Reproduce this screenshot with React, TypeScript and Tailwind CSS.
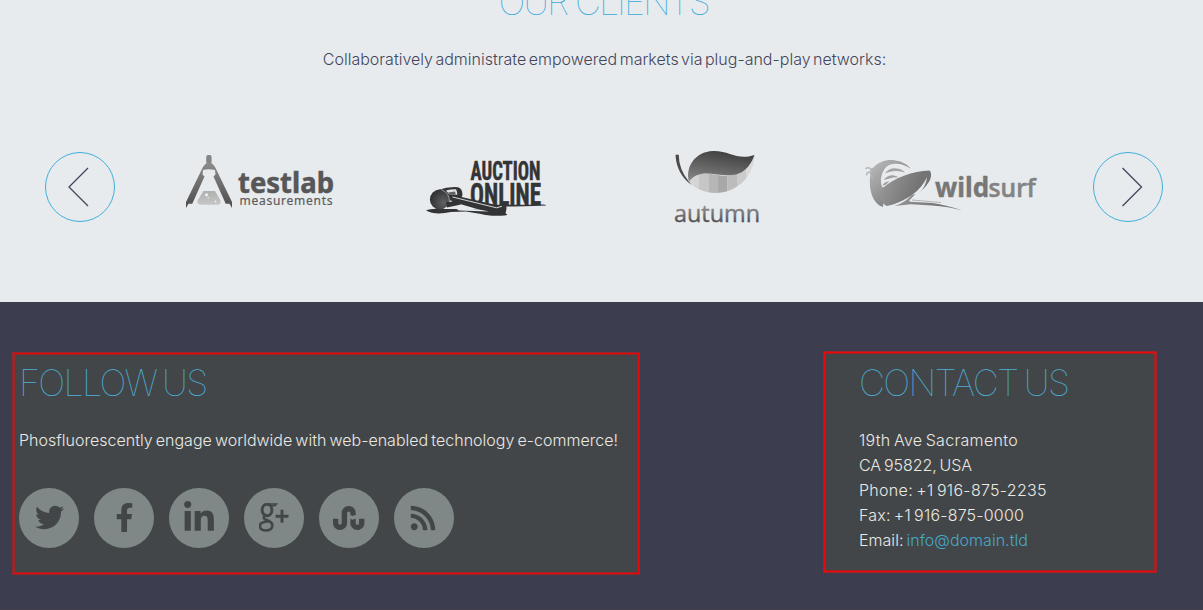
import { FaFacebookF, FaLinkedinIn, FaRss, FaStumbleupon, FaTwitter } from "react-icons/fa";
import type { ReactNode } from "react";

function Arrow({ flip }: { flip?: boolean }) {
  return (
    <button className="flex size-[70px] items-center justify-center rounded-full border border-[#41afdc]">
      <svg className={flip ? "ml-[7px]" : "mr-[3px]"} width="22" height="40" viewBox="0 0 22 40" fill="none" stroke="#44445c" strokeWidth="1.3">
        <path d={flip ? "M1.500 1 20.500 20 1.500 39" : "M20 1 1 20 20 39"} />
      </svg>
    </button>
  );
}

function TestLab() {
  return (
    <svg width="152" height="56" viewBox="184 153 152 56" fontWeight="400">
      <defs>
        <linearGradient id="leg" x1="0" y1="0" x2="0" y2="1">
          <stop offset="0" stopColor="#8b8b8b" />
          <stop offset="1" stopColor="#4d4d4d" />
        </linearGradient>
        <linearGradient id="fluid" x1="0" y1="0" x2="0" y2="1">
          <stop offset="0" stopColor="#b0b0b0" />
          <stop offset="1" stopColor="#c6c6c6" />
        </linearGradient>
      </defs>
      <rect x="206.200" y="155" width="5.400" height="9" rx="2" fill="#868686" />
      <path
        d="M207 163h4c1.500.8 4 3 5 6l16 33v6l-2.500-4.200h-3.800L213.500 176.500l2-2-.5-4.500q-6-1.500-12 0l-.5 4.500 2 2L192.300 203.800h-3.800L186 208v-6l16-33c1-3 3.500-5.200 5-6Z"
        fill="url(#leg)"
      />
      <path d="M203.500 191h11.500l5.500 9.500q.8 4.200-3 4.200H200.500q-3.800-.3-3-4.200Z" fill="url(#fluid)" />
      <circle cx="206.500" cy="194.800" r="1.500" fill="#eef0f1" />
      <circle cx="208.200" cy="197.800" r=".8" fill="#eef0f1" />
      <circle cx="215.500" cy="201.500" r=".9" fill="#eef0f1" />
      <text x="238" y="192.500" textLength="96" lengthAdjust="spacingAndGlyphs" fontSize="28" fontWeight="700" fill="#575757" stroke="#575757" strokeWidth=".5" fontFamily="Noto Sans, sans-serif">testlab</text>
      <text x="239.500" y="204.500" textLength="93" fontSize="12" fill="#5c5c5c" stroke="#5c5c5c" strokeWidth=".2" fontFamily="Noto Sans, sans-serif">measurements</text>
    </svg>
  );
}

function Auction() {
  return (
    <svg width="124" height="60" viewBox="424 158 124 60" fill="#333436">
      <defs>
        <radialGradient id="gavel" cx=".7" cy=".65" r=".7">
          <stop offset="0" stopColor="#606163" />
          <stop offset="1" stopColor="#303133" />
        </radialGradient>
      </defs>
      <g fontWeight="700" stroke="#333436" strokeWidth=".5" fontFamily="Roboto Condensed, Liberation Sans Narrow, Roboto, sans-serif">
        <text x="470.500" y="180" textLength="70" lengthAdjust="spacingAndGlyphs" fontSize="25">AUCTION</text>
        <text x="470" y="205" textLength="71" lengthAdjust="spacingAndGlyphs" fontSize="31">ONLINE</text>
      </g>
      <path d="M480 204.800h58q9-.6 8 .7-10 .8-32 .9l-34 .3Z" />
      <path d="M426 210.500q5-2.500 16-1.500h22l21 1 19 3q6 1.500 1 2.500-16 1-24-1.500l-15-2.500-15 .5q-16 3.500-25-1.500Z" />
      <path d="M438 190q10-3.500 20-2.800 4.500 1.300 4.500 7.800l-1.500 4-20 3Z" />
      <path d="M446 190.500q5-1.500 10-1.300 1.200 2 1.300 5.500l-8.300-.5Z" fill="#dfe1e3" />
      <path d="m448 192.500 7-1 .8 3-6.300.2Z" fill="#606163" />
      <path d="m452 196.500 3-.9 43.500 10 4-1.300q4.500.2 4 4.200l-1 5.500q-6 1.500-13-.5l-41-12Z" />
      <path d="m452.500 197 44 10.800 5.500-1.500" stroke="#d2d4d6" fill="none" strokeWidth="1" />
      <ellipse cx="439.800" cy="199.500" rx="9.900" ry="10" fill="url(#gavel)" />
      <path d="M441 189.500q9 3 8.500 14" fill="none" stroke="#b9bbbd" strokeWidth=".7" />
      <path d="m446 202 10-.5 5 3-14 3Z" />
      <path d="m454 207.500 28 2.500 7 1.500-30-1Z" fill="#e8ebee" />
    </svg>
  );
}

function Autumn() {
  return (
    <svg width="86" height="74" viewBox="674 150 86 74" fontWeight="400">
      <defs>
        <linearGradient id="leaf" x1=".2" y1="1" x2=".55" y2="0">
          <stop offset="0" stopColor="#858585" />
          <stop offset="1" stopColor="#3f3f3f" />
        </linearGradient>
        <linearGradient id="word" x1="0" y1="0" x2="0" y2="1">
          <stop offset=".25" stopColor="#999" />
          <stop offset=".8" stopColor="#505050" />
        </linearGradient>
        <clipPath id="belly">
          <path d="M689 181.500C697 171 708 173 717 175c14 2.500 28-1 37.500-20C754 178 735 193 716 193c-11 0-21-4-27-11.500Z" />
        </clipPath>
      </defs>
      <g clipPath="url(#belly)">
        <path fill="#d5d5d5" d="M687 150h12v44h-12Z" />
        <path fill="#c6c6c6" d="M699 150h9.500v44H699Z" />
        <path fill="#b6b6b6" d="M708.500 150h9.500v44h-9.500Z" />
        <path fill="#a8a8a8" d="M718 150h9.500v44H718Z" />
        <path fill="#bcbcbc" d="M727.500 150h9.500v44h-9.500Z" />
        <path fill="#cbcbcb" d="M737 150h9v44h-9Z" />
        <path fill="#d9dadc" d="M746 150h10v44h-10Z" />
      </g>
      <path d="M675.500 155q1.500-.8 3.300 0 0 14 9.700 26l3 4q-15-11-16-30Z" fill="#4b4b4b" />
      <path d="M689 181.500c-4-14 6-30 24-30.500 17-.5 24 10 41.500 4C747 175 735 177 717 174.500c-12-2-21-2-28 7Z" fill="url(#leaf)" />
      <text x="674" y="221.500" textLength="86" lengthAdjust="spacingAndGlyphs" fontSize="23.500" fill="url(#word)" stroke="url(#word)" strokeWidth=".4" fontFamily="Open Sans, Noto Sans, sans-serif">autumn</text>
    </svg>
  );
}

function WildSurf() {
  return (
    <svg width="174" height="56" viewBox="864 158 174 56">
      <defs>
        <linearGradient id="wave" x1="0" y1="0" x2=".8" y2="1">
          <stop offset="0" stopColor="#bcbcbc" />
          <stop offset="1" stopColor="#747474" />
        </linearGradient>
        <linearGradient id="board" x1="0" y1="0" x2="1" y2=".3">
          <stop offset="0" stopColor="#9c9c9c" />
          <stop offset=".8" stopColor="#747474" />
        </linearGradient>
      </defs>
      <path
        d="M870.500 174c-1-4 0-6 3-6.500 5-6 14-8.500 22-7 7 1 12 4 15 8-6-4-12-5.500-18-4.500-5 1-8 4-9 7-2 3-3 8-2.500 12l1 4 3 1-2 19c-10-3-15-17-12.500-33Z"
        fill="url(#wave)"
      />
      <path d="M885 173.500q4-6 12-5 5 .5 8 4-5-1.800-10-1.500-5 .3-10 2.500Z" fill="#a5a5a5" />
      <path d="M883.500 180q4-5.300 10.500-4.600 3 .3 4.500 2-5-.2-9 1-3 .8-6 1.600Z" fill="#a0a0a0" />
      <path d="M882.500 185.500q2-3.800 7-4.200l-4 3.500Z" fill="#999" />
      <path d="M865.500 168.800q3-2.300 5.500.5l1 3.500M866.500 175.500q0-3.500 4-3.500M870 173l3 6" stroke="#b4b4b4" fill="none" strokeWidth="1.300" />
      <path d="M881 189.500c13-12 32-18.500 48.500-19 2.500 2 2 8-1 12-7 11-20 17-35 22l-7 1.500c-6-4-7-10-5.500-16.500Z" fill="url(#board)" />
      <path d="M886.500 207q32-10 40.500-30-2 19-27.500 26.800l-5.500 2.200Z" fill="#e8ebee" />
      <path d="M894.500 206q12-4 17-11l4-1-6 6.200q-1 1.300 1 1.500l22 1.300q14 2 30 7.500-14-4-30.500-5l-21-1.300-16.500 1.800Z" fill="url(#board)" />
      <path d="m912 200 29 2.500" stroke="#b4b5b6" strokeWidth="1" fill="none" />
      <text x="935" y="196.500" textLength="54" lengthAdjust="spacingAndGlyphs" fontSize="26" fontWeight="700" fill="#777" stroke="#777" strokeWidth=".4" fontFamily="Noto Sans, sans-serif">wild</text>
      <text x="988.500" y="196.500" textLength="47" lengthAdjust="spacingAndGlyphs" fontSize="26" fontWeight="500" fill="#838383" stroke="#838383" strokeWidth=".6" fontFamily="Noto Sans, sans-serif">surf</text>
    </svg>
  );
}

function GooglePlus() {
  return (
    <svg width="30" height="30" viewBox="0 0 30 30" fill="none" stroke="#434648">
      <ellipse cx="8" cy="7" rx="4.900" ry="5.700" strokeWidth="3" />
      <path d="M9 1h8.500l-1.500 1.800h-4" strokeWidth="1.500" />
      <path d="M6 12.800c-3.500 3.200 1 3.700 4.500 5.500 5 3 3 9.200-3.500 9.200-7.500 0-8-7-2-8.500l5-.7" strokeWidth="2.600" />
      <path d="M16.500 13.200h13M23 6.700v13" strokeWidth="2.900" />
    </svg>
  );
}

function Social({ children }: { children: ReactNode }) {
  return <a className="flex size-[60px] items-center justify-center rounded-full bg-[#7f8886] text-[#434648]">{children}</a>;
}

export default function App() {
  return (
    <div className="flex h-[610px] w-[1203px] flex-col overflow-hidden border-b border-[#463e49] bg-[#3c3e50] font-['Inter',sans-serif] text-base leading-[25px] font-light">
      <section className="flex h-[302px] shrink-0 flex-col items-center bg-[#e8ebee] text-[#44465b]">
        <h2 className="-mt-[22px] h-12 pl-1 text-[36px] leading-[48px] font-thin tracking-[-2.1px] whitespace-nowrap text-[#38aadb]">OUR CLIENTS</h2>
        <p className="mt-[21px] pl-[6px] tracking-[0.01px] whitespace-nowrap [word-spacing:-2.1px]">Collaboratively administrate empowered markets via plug-and-play networks:</p>
        <div className="mt-[76px] flex h-[78px] w-full items-start pl-[45px]">
          <div className="pt-1"><Arrow /></div>
          <div className="ml-[69px] pt-[5px]"><TestLab /></div>
          <div className="ml-[88px] pt-2.5"><Auction /></div>
          <div className="ml-[126px] pt-0.5"><Autumn /></div>
          <div className="ml-[104px] pt-2.5"><WildSurf /></div>
          <div className="ml-[55px] pt-1"><Arrow flip /></div>
        </div>
      </section>
      <footer className="flex items-start pt-[49px] pl-3 text-[#e9e9e4]">
        <section className="mt-px h-[223px] w-[628px] border border-[#8f292d] bg-[#434648] pt-1.5 pl-1.5 shadow-[inset_0_0_0_1px_#e3090d,inset_0_0_0_2px_#9c2427]">
          <h2 className="h-12 text-[36px] leading-[48px] font-thin tracking-[-1.75px] whitespace-nowrap text-[#4bb0d8] [word-spacing:-2.5px]">FOLLOW US</h2>
          <p className="mt-[21px] tracking-[0.01px] whitespace-nowrap [word-spacing:-1.4px]">Phosfluorescently engage worldwide with web-enabled technology e-commerce!</p>
          <div className="mt-[35px] flex gap-[15px]">
            <Social><FaTwitter className="mb-0.5" size={29} /></Social>
            <Social><FaFacebookF className="mb-0.5" size={29} /></Social>
            <Social><FaLinkedinIn className="mb-px" size={34} /></Social>
            <Social><GooglePlus /></Social>
            <Social><FaStumbleupon size={32} /></Social>
            <Social><FaRss className="mr-0.5" size={28} /></Social>
          </div>
        </section>
        <section className="ml-[183px] h-[222px] w-[334px] border border-[#a32226] bg-[#434648] pt-[7px] pl-[35px] shadow-[inset_0_0_0_1px_#ee080b,inset_0_0_0_2px_#9c2427]">
          <h2 className="h-12 text-[36px] leading-[48px] font-thin tracking-[-1.7px] whitespace-nowrap text-[#4bb0d8] [word-spacing:-2px]">CONTACT US</h2>
          <address className="mt-[21px] not-italic [word-spacing:-1.5px]">
            <p className="tracking-[0.31px]">19th Ave Sacramento</p>
            <p className="tracking-[-0.07px]">CA 95822, USA</p>
            <p className="tracking-[0.3px]">Phone: +1 916-875-2235</p>
            <p className="tracking-[0.19px]">Fax: +1 916-875-0000</p>
            <p className="tracking-[0.03px]">Email: <a className="text-[#48a6c8]">info@domain.tld</a></p>
          </address>
        </section>
      </footer>
    </div>
  );
}
